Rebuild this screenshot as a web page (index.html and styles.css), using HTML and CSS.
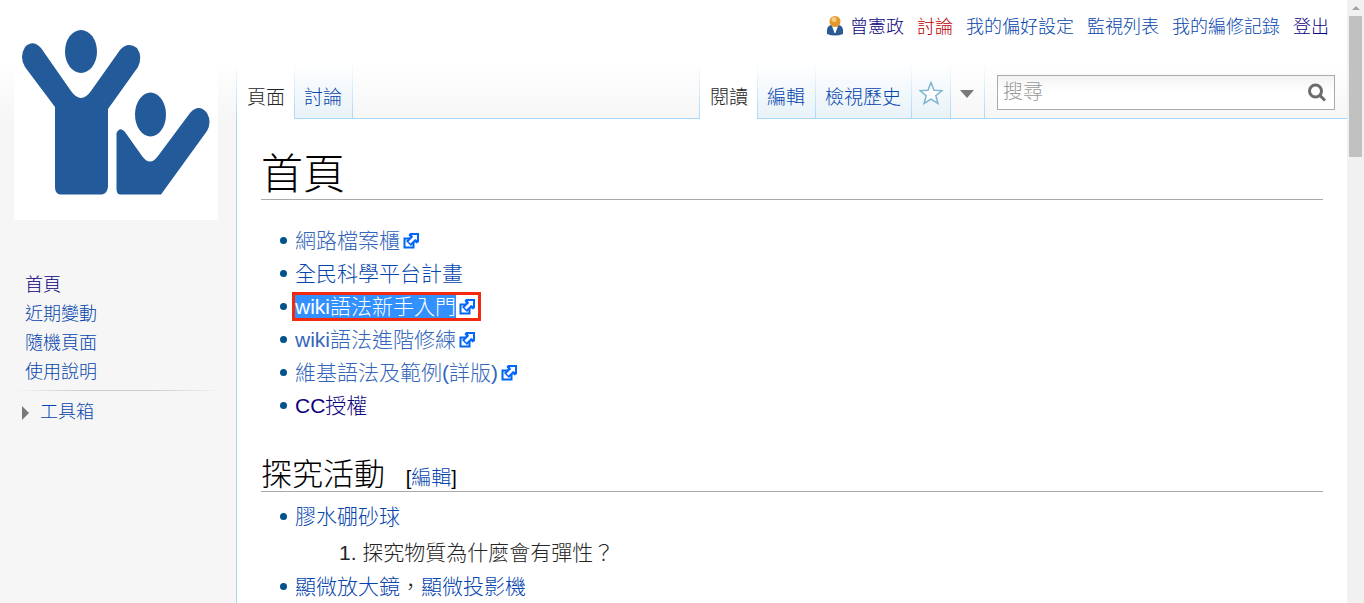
FILE: index.html
```html
<!DOCTYPE html>
<html lang="zh-Hant">
<head>
  <meta charset="UTF-8">
  <meta name="viewport" content="width=device-width, initial-scale=1.0">
  <title>首頁</title>
  <link rel="stylesheet" href="styles.css">
</head>
<body>
  <svg class="defs" aria-hidden="true">
    <symbol id="external" viewBox="0 0 16 16">
      <path fill="#fff" stroke="#06e" stroke-width="2" d="M1.500 5.500H10.500V14.500H1.500Z"/>
      <path fill="#06f" d="M7 0H16V9L13.500 10.500L12 9L8 13L3 8L7 4L5.500 2Z"/>
      <path fill="#fff" d="M9 2H14V7L12 6L7.500 10.500L5.500 8.500L10 4Z"/>
    </symbol>
  </svg>

  <div class="page">
    <aside class="sidebar">
      <a class="logo" href="#" aria-label="首頁">
        <svg viewBox="14 16 204 204">
          <ellipse cx="81" cy="51.5" rx="16" ry="21.5"/>
          <path d="M55 107L25 67Q19 57 25 47Q33 39 41 48L71 91Q81 105 91 91L120 50Q128 41 137 48Q143 57 138 67L108 109V187Q107 194 102 194.500H60Q55 194 55 187Z"/>
          <ellipse cx="150.500" cy="114.500" rx="15.500" ry="22"/>
          <path d="M116.500 133Q120 126 125 132L142 156Q150 167 158 156L190 113Q199 103 207 113Q212 122 207 131L161 194.500H120Q116.500 194 116.500 189Z"/>
        </svg>
      </a>
      <nav>
        <ul class="menu">
          <li><a class="visited" href="#">首頁</a></li>
          <li><a href="#">近期變動</a></li>
          <li><a href="#">隨機頁面</a></li>
          <li><a href="#">使用說明</a></li>
        </ul>
      </nav>
      <div class="toolbox"><a href="#">工具箱</a></div>
    </aside>

    <div class="main">
      <header class="header">
        <ul class="personal">
          <li class="user">
            <svg viewBox="0 0 18 22" aria-hidden="true">
              <path fill="#2c5a94" d="M1 19Q0 11 5 10H13Q18 11 17 19Q9 22 1 19Z"/>
              <path fill="#fff" d="M6 11H12L9.500 18H8.500Z"/>
              <circle cx="9" cy="6.500" r="5.500" fill="#e2982f"/>
              <circle cx="8" cy="4.500" r="2.500" fill="#f6cc7c"/>
            </svg>
            <a class="visited" href="#">曾憲政</a>
          </li>
          <li><a class="new" href="#">討論</a></li>
          <li><a href="#">我的偏好設定</a></li>
          <li><a href="#">監視列表</a></li>
          <li><a href="#">我的編修記錄</a></li>
          <li><a class="visited" href="#">登出</a></li>
        </ul>

        <div class="nav-row">
          <ul class="tabs">
            <li class="selected"><a href="#">頁面</a></li>
            <li><a href="#">討論</a></li>
          </ul>
          <ul class="tabs views">
            <li class="selected"><a href="#">閱讀</a></li>
            <li><a href="#">編輯</a></li>
            <li><a href="#">檢視歷史</a></li>
            <li>
              <a class="watch" href="#" aria-label="監視">
                <svg viewBox="0 0 24 24"><path d="M12 1.500L15 9.200L23 9.600L16.800 14.700L19 22.500L12 18.100L5 22.500L7.200 14.700L1 9.600L9 9.200Z"/></svg>
              </a>
            </li>
            <li class="more"><button type="button" aria-label="更多"></button></li>
          </ul>
          <form class="search">
            <input type="search" placeholder="搜尋" aria-label="搜尋">
            <button type="submit" aria-label="搜尋">
              <svg viewBox="0 0 20 20"><circle cx="8.500" cy="8" r="6"/><path d="M13 12.500L18 17.500"/></svg>
            </button>
          </form>
        </div>
      </header>

      <main class="content">
        <h1>首頁</h1>
        <ul class="links">
          <li><a class="external" href="#"><span>網路檔案櫃</span><svg><use href="#external"/></svg></a></li>
          <li><a href="#">全民科學平台計畫</a></li>
          <li><a class="external marked" href="#"><span>wiki語法新手入門</span><svg><use href="#external"/></svg></a></li>
          <li><a class="external" href="#"><span>wiki語法進階修練</span><svg><use href="#external"/></svg></a></li>
          <li><a class="external" href="#"><span>維基語法及範例(詳版)</span><svg><use href="#external"/></svg></a></li>
          <li><a class="visited" href="#">CC授權</a></li>
        </ul>

        <h2>探究活動 <span class="edit">[<a href="#">編輯</a>]</span></h2>
        <ul class="links">
          <li>
            <a href="#">膠水硼砂球</a>
            <ol>
              <li>探究物質為什麼會有彈性？</li>
            </ol>
          </li>
          <li><a href="#">顯微放大鏡</a>，<a href="#">顯微投影機</a></li>
        </ul>
      </main>
    </div>
  </div>

  <div class="scrollbar" aria-hidden="true">
    <div class="arrow"></div>
    <div class="thumb"></div>
  </div>
</body>
</html>
```
FILE: styles.css
```css
* {
  box-sizing: border-box;
}

body {
  margin: 0;
  display: flex;
  height: 100vh;
  overflow: hidden;
  background: #f6f6f6;
  color: #252525;
  font-family: "Liberation Sans", "Noto Sans CJK TC", sans-serif;
  font-weight: 300;
  font-size: 21px;
}

ul, ol {
  list-style: none;
  margin: 0;
  padding: 0;
}

a {
  color: #0645ad;
  text-decoration: none;
}

a:hover {
  text-decoration: underline;
}

a.visited {
  color: #0b0080;
}

a.new {
  color: #ba0000;
}

.defs {
  position: absolute;
  width: 0;
  height: 0;
}

/* header fades from white to the page grey */
.page {
  display: flex;
  flex: 1;
  min-width: 0;
  background: linear-gradient(#fff 60px, #f6f6f6 118px);
}

/* Sidebar */
.sidebar {
  width: 236px;
  flex-shrink: 0;
  padding: 16px 13px 0 14px;
  font-size: 18px;
}

.logo {
  display: block;
  width: 204px;
  height: 204px;
  background: #fff;
}

.logo svg {
  display: block;
  fill: #235a9a;
}

.menu {
  padding: 51px 0 3px 11px;
  line-height: 29px;
}

.toolbox {
  display: flex;
  align-items: center;
  gap: 11px;
  padding: 8px;
  line-height: 29px;
  background: linear-gradient(to right, #f6f6f6, #ccc 33%, #ccc 66%, #f6f6f6) top / 100% 1px no-repeat;
}

.toolbox::before {
  content: "";
  border: 7px solid transparent;
  border-left-color: #797979;
  border-right-width: 0;
}

/* Header */
.main {
  flex: 1;
  min-width: 0;
  display: flex;
  flex-direction: column;
}

.personal {
  display: flex;
  justify-content: flex-end;
  gap: 13px;
  height: 62px;
  padding: 13px 18px 0 0;
  font-size: 18px;
  line-height: 29px;
}

.user {
  display: flex;
  gap: 6px;
}

.user svg {
  width: 18px;
  height: 22px;
  margin-top: 2px;
}

.nav-row {
  display: flex;
  height: 57px;
  background: linear-gradient(#a7d7f9, #a7d7f9) bottom / 100% 1px no-repeat;
}

.tabs {
  display: flex;
  padding-right: 1px;
  font-size: 19px;
  background: linear-gradient(#fff, #a7d7f9) right / 1px 100% no-repeat;
}

.views {
  margin-left: auto;
}

.tabs li {
  background:
    linear-gradient(#fff, #a7d7f9) left / 1px 100% no-repeat,
    linear-gradient(#fff, #e8f2f8);
  border-bottom: 1px solid #a7d7f9;
}

.tabs .selected {
  border-bottom: 0;
  background:
    linear-gradient(#fff, #a7d7f9) left / 1px 100% no-repeat,
    #fff;
}

.tabs .more {
  background:
    linear-gradient(#fff, #a7d7f9) left / 1px 100% no-repeat,
    linear-gradient(#fff, #f6f6f6);
}

.tabs a {
  display: block;
  padding: 21px 10px 0;
  line-height: 30px;
}

.tabs .selected a {
  padding: 21px 9px 0 11px;
  color: #252525;
}

.tabs .watch {
  padding: 19px 7px 0 8px;
}

.watch svg {
  display: block;
  width: 24px;
  height: 24px;
  fill: #fff;
  stroke: #7cb5d1;
  stroke-width: 1.5;
}

.more button {
  width: 34px;
  height: 100%;
  padding: 7px 0 0 10px;
  border: 0;
  background: none;
}

.more button::before {
  content: "";
  display: block;
  width: 0;
  border: 7px solid transparent;
  border-top: 8px solid #797979;
  border-bottom: 0;
}

.search {
  display: flex;
  align-items: center;
  width: 338px;
  height: 35px;
  margin: 13px 12px 0;
  border: 1px solid #aaa;
  background: linear-gradient(#f3f3f3, #fff 50%);
}

.search input {
  flex: 1;
  min-width: 0;
  padding: 0 5px;
  border: 0;
  outline: 0;
  background: none;
  font: inherit;
  font-size: 20px;
}

.search input::placeholder {
  color: #999;
}

.search button {
  display: flex;
  padding: 0 7px;
  border: 0;
  background: none;
}

.search svg {
  width: 20px;
  height: 20px;
  fill: none;
  stroke: #6b6b6b;
  stroke-width: 3;
}

/* Content */
.content {
  flex: 1;
  padding: 31px 24px 0;
  border-left: 1px solid #a7d7f9;
  background: #fff;
}

h1, h2 {
  margin: 0;
  color: #000;
  font-weight: 300;
  border-bottom: 1px solid #aaa;
}

h1 {
  margin-bottom: 24px;
  font-size: 42px;
  line-height: 49px;
}

h2 {
  margin: 40px 0 8px;
  font-size: 31px;
  line-height: 26px;
}

.edit {
  margin-left: 12px;
  font-size: 20px;
}

.links > li {
  position: relative;
  padding-left: 34px;
  line-height: 33px;
}

.links > li::before {
  content: "";
  position: absolute;
  top: 13px;
  left: 19px;
  width: 7px;
  height: 7px;
  border-radius: 50%;
  background: #00528c;
}

.external {
  display: inline-flex;
  align-items: center;
  gap: 3px;
  color: #36b;
}

.external svg {
  width: 16px;
  height: 16px;
}

.marked {
  padding-right: 3px;
  line-height: 23px;
  outline: 3px solid #f4290d;
}

.marked span {
  background: #3390ff;
  color: #fff;
}

ol {
  padding: 3px 0 1px 44px;
  counter-reset: step;
}

ol li::before {
  counter-increment: step;
  content: counter(step) ". ";
}

/* Scrollbar */
.scrollbar {
  width: 17px;
  padding: 6px 2px;
  background: #f1f1f1;
}

.arrow {
  width: 8px;
  margin: 0 auto 6px;
  border: 4px solid transparent;
  border-bottom-color: #a3a3a3;
  border-top: 0;
}

.thumb {
  height: 141px;
  background: #c1c1c1;
}
```
